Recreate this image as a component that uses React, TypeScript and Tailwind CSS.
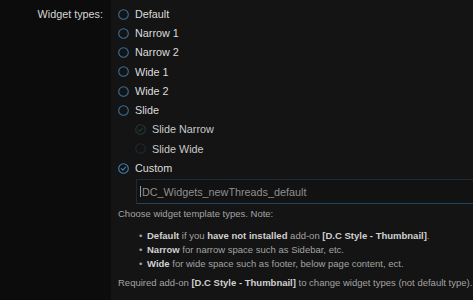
import React from "react";

type Opt = { label: string; state: "off" | "on" | "dimOn" | "dimOff"; sub?: boolean };

const options: Opt[] = [
  { label: "Default", state: "off" },
  { label: "Narrow 1", state: "off" },
  { label: "Narrow 2", state: "off" },
  { label: "Wide 1", state: "off" },
  { label: "Wide 2", state: "off" },
  { label: "Slide", state: "off" },
  { label: "Slide Narrow", state: "dimOn", sub: true },
  { label: "Slide Wide", state: "dimOff", sub: true },
  { label: "Custom", state: "on" },
];

function Radio({ state }: { state: Opt["state"] }) {
  if (state === "on" || state === "dimOn") {
    const c = state === "on" ? "#3f7fb0" : "#1f3a34";
    return (
      <svg width="11" height="11" viewBox="0 0 11 11" className="shrink-0">
        <circle cx="5.5" cy="5.5" r="4.8" fill="none" stroke={c} strokeWidth="1.1" />
        <path d="M3.3 5.6 L4.9 7.1 L7.7 4.1" fill="none" stroke={c} strokeWidth="1.1" strokeLinecap="round" strokeLinejoin="round" />
      </svg>
    );
  }
  const c = state === "off" ? "#3a6f98" : "#1e2a33";
  return (
    <svg width="11" height="11" viewBox="0 0 11 11" className="shrink-0">
      <circle cx="5.5" cy="5.5" r="4.8" fill="none" stroke={c} strokeWidth="1.1" />
    </svg>
  );
}

export default function App() {
  return (
    <div className="flex w-[473px] h-[300px] overflow-hidden bg-[#0c0c0c] font-['Liberation_Sans',Arial,sans-serif]">
      <div className="w-[111px] shrink-0 pt-[7px] pr-[8px] text-right text-[10.8px] text-[#d6d6d6] leading-[14px]">
        Widget types:
      </div>
      <div className="flex-1 bg-[#141414] pl-[7px] pt-[4.4px]">
        {options.map((o) => (
          <div
            key={o.label}
            className={`flex items-center h-[19.25px] gap-[6px] text-[10.8px] ${o.sub ? "pl-[17px]" : ""} ${
              o.state === "dimOn" || o.state === "dimOff" ? "text-[#c8c8c8]" : "text-[#dcdcdc]"
            }`}
          >
            <Radio state={o.state} />
            <span>{o.label}</span>
          </div>
        ))}
        <div className="ml-[18px] -mr-[20px] mt-[1.5px] h-[25px] flex items-center bg-[#121212] border-y border-l border-[#1a2c39] border-b-[#1f4560] pl-[3px] text-[10.8px] text-[#8f8f8f]">
          <span className="w-px h-[11px] bg-[#9a9a9a] mr-[1px]" />
          <span>DC_Widgets_newThreads_default</span>
        </div>
        <div className="text-[9.5px] text-[#a3a3a3] leading-[14px] mt-[3px]">
          <div>Choose widget template types. Note:</div>
          <ul className="mt-[8px] pl-[29px]">
            <li className="relative before:content-['•'] before:absolute before:-left-[8px]">
              <b className="text-[#d0d0d0]">Default</b> if you <b className="text-[#d0d0d0]">have not installed</b> add-on{" "}
              <b className="text-[#d0d0d0]">[D.C Style - Thumbnail]</b>.
            </li>
            <li className="relative before:content-['•'] before:absolute before:-left-[8px]">
              <b className="text-[#d0d0d0]">Narrow</b> for narrow space such as Sidebar, etc.
            </li>
            <li className="relative before:content-['•'] before:absolute before:-left-[8px]">
              <b className="text-[#d0d0d0]">Wide</b> for wide space such as footer, below page content, ect.
            </li>
          </ul>
          <div className="mt-[5px] whitespace-nowrap">
            Required add-on <b className="text-[#d0d0d0]">[D.C Style - Thumbnail]</b> to change widget types (not default type).
          </div>
        </div>
      </div>
    </div>
  );
}
